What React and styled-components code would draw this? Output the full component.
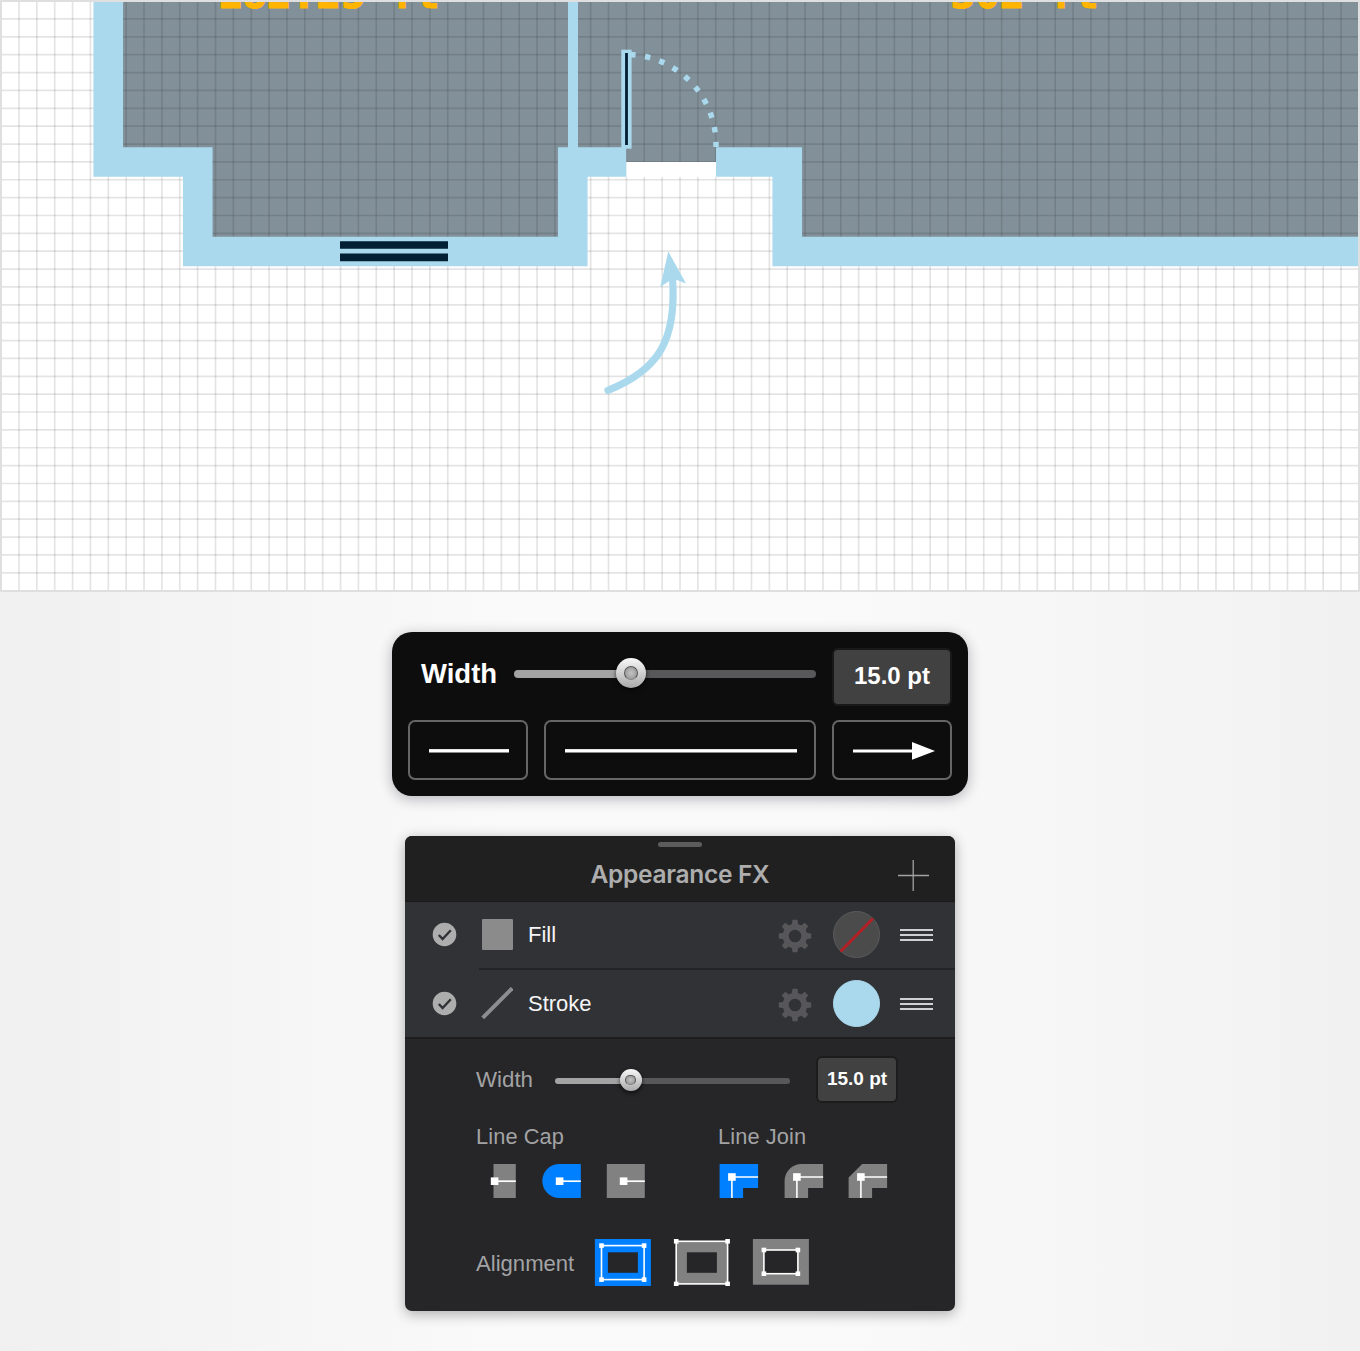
import React from "react";
import styled, { createGlobalStyle } from "styled-components";

const SKY = "#aad9ed";
const NAVY = "#021f33";
const BLUE = "#0080ff";
const GRAY = "#818181";
const PANEL = "#262628";
const sans = `"Liberation Sans", Arial, sans-serif`;

const GlobalStyle = createGlobalStyle`
  *, *::before, *::after { box-sizing: border-box; }
  body { margin: 0; background: #f5f5f5; font-family: ${sans}; }
  svg { display: block; flex: none; }
`;

const Page = styled.main`
  width: 1360px;
  height: 1351px;
  overflow: hidden;
  display: flex;
  flex-direction: column;
  align-items: center;
  background: linear-gradient(90deg, #f0f0f0 0%, #fafafa 38%, #fafafa 60%, #f1f1f1 100%);
`;

const Canvas = styled.section`
  width: 1360px;
  height: 592px;
  border: 2px solid #dfdfdf;
  background: #fff;
  overflow: hidden;
`;

const StrokePopover = styled.section`
  width: 576px;
  height: 164px;
  margin-top: 40px;
  padding: 16px;
  border-radius: 20px;
  background: #0d0d0e;
  box-shadow: 0 3px 14px rgba(20, 20, 40, 0.3);
  display: flex;
  flex-direction: column;
  justify-content: space-between;
`;

const PopoverRow = styled.div`
  display: flex;
  gap: 16px;
`;

const WidthRow = styled.div`
  display: flex;
  align-items: center;
  height: ${(p) => (p.$small ? "48px" : "58px")};
  padding-left: ${(p) => (p.$small ? "0" : "13px")};
`;

const WidthLabel = styled.label`
  width: ${(p) => (p.$small ? "79px" : "93px")};
  font: ${(p) => (p.$small ? "400 22.3px" : "700 27.5px")} / 32px ${sans};
  color: ${(p) => (p.$small ? "#a3a3a5" : "#fff")};
  margin-bottom: ${(p) => (p.$small ? "0" : "6px")};
`;

const Track = styled.div`
  display: flex;
  align-items: center;
  width: ${(p) => (p.$small ? "235px" : "302px")};
  height: ${(p) => (p.$small ? "6px" : "8px")};
  margin-top: ${(p) => (p.$small ? "2px" : "-7px")};
  border-radius: 4px;
  background: linear-gradient(
    90deg,
    #a3a3a4 0 ${(p) => p.$value}px,
    #58585a ${(p) => p.$value}px
  );
`;

const Knob = styled.div`
  display: grid;
  place-items: center;
  flex: none;
  width: ${(p) => p.$size}px;
  height: ${(p) => p.$size}px;
  margin-left: ${(p) => p.$at}px;
  margin-top: -2px;
  border-radius: 50%;
  background: linear-gradient(#f8f8f8, #a9a9a9);
  box-shadow: 0 2px 4px rgba(0, 0, 0, 0.7);

  &::after {
    content: "";
    width: 46.7%;
    height: 46.7%;
    border-radius: 50%;
    border: 1.5px solid #575757;
    border-bottom-color: #868686;
    background: radial-gradient(#c4c4c4, #8c8c8c);
  }
`;

const ValueBox = styled.output`
  display: flex;
  justify-content: center;
  width: ${(p) => (p.$small ? "82px" : "120px")};
  height: ${(p) => (p.$small ? "47px" : "58px")};
  margin-left: ${(p) => (p.$small ? "26px" : "16px")};
  margin-top: ${(p) => (p.$small ? "-2px" : "-1px")};
  border: 2px solid ${(p) => (p.$small ? "#1c1c1d" : "#19191a")};
  border-radius: 6px;
  background: #414142;
  color: #fff;
  font: 700 ${(p) => (p.$small ? "19px / 42px" : "24px / 51px")} ${sans};
`;

const StyleButton = styled.button`
  display: grid;
  place-items: center;
  width: ${(p) => p.$width}px;
  height: 60px;
  padding: 0 0 0 ${(p) => (p.$arrow ? "4px" : "2px")};
  border: 2px solid #666667;
  border-radius: 7px;
  background: transparent;
`;

const LineSample = styled.div`
  width: ${(p) => p.$width}px;
  height: 4px;
  margin-top: 2px;
  background: linear-gradient(#e6e6e6 0 1px, #fff 1px 3px, #8a8a8a 3px);
`;

const FxPanel = styled.section`
  width: 550px;
  height: 475px;
  margin-top: 40px;
  overflow: hidden;
  border-radius: 7px;
  background: ${PANEL};
  box-shadow: 0 3px 14px rgba(0, 0, 0, 0.32);
`;

const FxHeader = styled.header`
  display: grid;
  grid-template: 14px 51px / 1fr 178px 1fr;
  align-items: start;
  justify-items: center;
  height: 66px;
  border-bottom: 1px solid #19191a;
  background: #202020;
`;

const Grip = styled.div`
  grid-area: 1 / 2;
  width: 44px;
  height: 5px;
  margin-top: 6px;
  border-radius: 3px;
  background: #5c5c5d;
`;

const Title = styled.h1`
  grid-area: 2 / 2;
  margin: 9px 0 0;
  white-space: nowrap;
  color: #adadae;
  font: 600 24.5px / 30px Inter, ${sans};
  letter-spacing: -0.3px;
`;

const AddButton = styled.button`
  grid-area: 2 / 3;
  justify-self: end;
  margin: 10px 26px 0 0;
  padding: 0;
  border: 0;
  background: none;
`;

const Layer = styled.div`
  display: flex;
  align-items: center;
  height: ${(p) => p.$height}px;
  padding: 0 21px ${(p) => p.$lift}px 27px;
  background: #313236;
`;

const LayerRule = styled.div`
  height: 2px;
  padding-left: 74px;
  background: #313236;

  &::after {
    content: "";
    display: block;
    height: 2px;
    background: #232427;
  }
`;

const LayerName = styled.span`
  width: 250px;
  margin: ${(p) => p.$lift}px 0 0 15px;
  color: #f5f5f6;
  font: 400 22px / 28px ${sans};
`;

const Swatch = styled.div`
  display: grid;
  place-items: center;
  width: 47px;
  height: 47px;
  margin: 0 20px 0 21px;
  border-radius: 50%;
  border: 1px solid ${(p) => (p.$none ? "#5a5a5b" : SKY)};
  background: ${(p) => (p.$none ? "#4b4b4c" : SKY)};
`;

const Handle = styled.div`
  display: flex;
  flex-direction: column;
  gap: 3px;
  width: 33px;
  margin-top: 1px;

  i {
    height: 2px;
    background: #d0cfd4;
  }
`;

const GlyphCell = styled.div`
  margin-left: 24px;
`;

const GearCell = styled.div`
  margin-top: 3px;
`;

const Settings = styled.div`
  height: 272px;
  padding: 17px 0 0 71px;
  border-top: 2px solid #1d1d1f;
`;

const Columns = styled.div`
  display: grid;
  grid-template-columns: 242px 1fr;
  margin-top: 19px;
`;

const GroupLabel = styled.h2`
  margin: 0;
  color: #a3a3a5;
  font: 400 ${(p) => p.$size || 22}px / 28px ${sans};
  letter-spacing: ${(p) => p.$spacing || 0}px;
  white-space: nowrap;
`;

const IconRow = styled.div`
  display: flex;
  align-items: center;
  gap: 22.5px;
  margin: 13px 0 0 ${(p) => p.$indent || 0}px;
`;

const AlignmentRow = styled.div`
  display: flex;
  align-items: center;
  margin-top: 40px;
`;

const AlignmentLabel = styled(GroupLabel)`
  padding-top: 3px;
`;

const AlignmentChoices = styled.div`
  display: flex;
  gap: 19px;
  margin-left: 18px;
`;

function FloorPlan() {
  const left = "108.25,-20 108.25,162 197.75,162 197.75,251.5 572.75,251.5 572.75,162 626.3,162";
  const right = "716,162 787.25,162 787.25,251.5 1380,251.5";
  const columns = Array.from({ length: 77 }, (_, i) => 1.1 + i * 17.866);
  const rows = Array.from({ length: 33 }, (_, i) => 1.1 + i * 17.866);
  return (
    <svg width="1356" height="588" viewBox="2 2 1356 588">
      <polygon points={`${left} ${right} 1380,-20`} fill="#829099" />
      <g stroke="#000" strokeOpacity=".105" strokeWidth="1.7">
        {columns.map((x) => <path key={x} d={`M${x} 0V590`} />)}
        {rows.map((y) => <path key={y} d={`M0 ${y}H1360`} />)}
      </g>
      <rect x="626.3" y="162" width="89.7" height="15" fill="#fff" />
      <g fill="none" stroke={SKY} strokeWidth="29.6">
        <polyline points={left} />
        <polyline points={right} />
        <path d="M573 0V150" strokeWidth="10" />
      </g>
      <path d="M340 245H448M340 257.4H448" stroke={NAVY} strokeWidth="7.6" />
      <rect x="621.3" y="49.7" width="10.3" height="99" fill={SKY} />
      <path d="M626.5 53V145" stroke={NAVY} strokeWidth="2.8" />
      <path
        d="M626 54.5A90 90 0 0 1 716 144.5V147"
        fill="none"
        stroke={SKY}
        strokeWidth="5.5"
        strokeDasharray="5.4 9.5"
        strokeDashoffset="-4.3"
      />
      <path d="M608 390.3C659 370 677 340 672.5 277" fill="none" stroke={SKY} strokeWidth="7.2" strokeLinecap="round" />
      <path d="M668.3 251.5L686 283.5L673 278.5L660.2 287Z" fill={SKY} />
      <g
        fill="#ffb400"
        stroke="#ffb400"
        strokeWidth="1.1"
        fontFamily="'DejaVu Sans Mono', monospace"
        fontWeight="700"
        fontSize="41"
      >
        <text x="217.5" y="8.4">182.25 ft</text>
        <text x="950.5" y="8.4">302 ft</text>
      </g>
    </svg>
  );
}

const Check = () => (
  <svg width="25" height="25" viewBox="0 0 25 25">
    <circle cx="12.5" cy="12.5" r="11.8" fill="#adadae" />
    <path d="M6.8 13L10.6 17.1L18.8 8.2" fill="none" stroke="#313236" strokeWidth="2.4" />
  </svg>
);

const Gear = () => (
  <svg width="34" height="34" viewBox="-17 -17 34 34">
    <circle r="9.3" fill="none" stroke="#57575a" strokeWidth="6" />
    {[0, 45, 90, 135, 180, 225, 270, 315].map((a) => (
      <path key={a} d="M-3.3 -10.5L-2.5 -16.2H2.5L3.3 -10.5Z" fill="#57575a" transform={`rotate(${a})`} />
    ))}
  </svg>
);

const FillGlyph = () => (
  <svg width="32" height="32" viewBox="0 0 32 32">
    <rect x="1" y="1" width="31" height="31" rx="1" fill="#8b8b8b" />
  </svg>
);

const StrokeGlyph = () => (
  <svg width="32" height="32" viewBox="0 0 32 32">
    <path d="M1.7 30.8L31.2 1.3" stroke="#8e8e90" strokeWidth="4" />
  </svg>
);

function LayerRow({ name, height, lift, glyph, none }) {
  return (
    <Layer $height={height} $lift={lift}>
      <Check />
      <GlyphCell>{glyph}</GlyphCell>
      <LayerName $lift={lift}>{name}</LayerName>
      <GearCell><Gear /></GearCell>
      <Swatch $none={none}>
        {none && (
          <svg width="45" height="45" viewBox="0 0 45 45">
            <path d="M6.5 39.5L39 6.5" stroke="#b51f24" strokeWidth="2.8" />
          </svg>
        )}
      </Swatch>
      <Handle><i /><i /><i /></Handle>
    </Layer>
  );
}

const Node = ({ x, y, size = 7.6 }) => (
  <rect x={x - size / 2} y={y - size / 2} width={size} height={size} fill="#fff" />
);

function CapIcon({ d, active, x }) {
  return (
    <svg width="42" height="34" viewBox="0.2 0 42 34">
      <path d={d} fill={active ? BLUE : GRAY} />
      <path d={`M${x} 17.2H40`} stroke="#fff" strokeWidth="1.7" />
      <Node x={x} y={17.2} />
    </svg>
  );
}

function JoinIcon({ corner, active }) {
  return (
    <svg width="42" height="34" viewBox="-0.6 0 42 34">
      <path d={`${corner}H38.5V24H23.5V34H0Z`} fill={active ? BLUE : GRAY} />
      <path d="M12.3 34V13H38.5" fill="none" stroke="#fff" strokeWidth="1.6" />
      <Node x={12.3} y={13} />
    </svg>
  );
}

function AlignIcon({ active, outer, inner, frame }) {
  const [x, y, w, h] = frame;
  const box = ([bx, by, bw, bh], fill) => <rect x={bx} y={by} width={bw} height={bh} fill={fill} />;
  return (
    <svg width="60" height="48" viewBox="-0.9 0 60 48">
      {box(outer, active ? BLUE : GRAY)}
      {box(inner, PANEL)}
      <rect x={x} y={y} width={w} height={h} fill="none" stroke="#fff" strokeWidth="1.6" />
      {[[x, y], [x + w, y], [x, y + h], [x + w, y + h]].map(([nx, ny]) => (
        <Node key={`${nx}-${ny}`} x={nx} y={ny} size={4.6} />
      ))}
    </svg>
  );
}

export default function App() {
  return (
    <Page>
      <GlobalStyle />
      <Canvas><FloorPlan /></Canvas>

      <StrokePopover>
        <WidthRow>
          <WidthLabel>Width</WidthLabel>
          <Track $value={117}><Knob $size={30} $at={102} /></Track>
          <ValueBox>15.0 pt</ValueBox>
        </WidthRow>
        <PopoverRow>
          <StyleButton $width={120}><LineSample $width={80} /></StyleButton>
          <StyleButton $width={272}><LineSample $width={232} /></StyleButton>
          <StyleButton $width={120} $arrow>
            <svg width="82" height="20" viewBox="0 0 82 20">
              <path d="M0 11H62" stroke="#fff" strokeWidth="3" />
              <path d="M59 2L82 11L59 19.8Z" fill="#fff" />
            </svg>
          </StyleButton>
        </PopoverRow>
      </StrokePopover>

      <FxPanel>
        <FxHeader>
          <Grip />
          <Title>Appearance FX</Title>
          <AddButton aria-label="Add">
            <svg width="32" height="32" viewBox="0 0 32 32">
              <path d="M16.2 0V31M1 15.5H32" stroke="#a2a2a3" strokeWidth="1.3" />
            </svg>
          </AddButton>
        </FxHeader>
        <LayerRow name="Fill" height={66} lift={2} glyph={<FillGlyph />} none />
        <LayerRule />
        <LayerRow name="Stroke" height={67} lift={1} glyph={<StrokeGlyph />} />
        <Settings>
          <WidthRow $small>
            <WidthLabel $small>Width</WidthLabel>
            <Track $small $value={76}><Knob $size={22} $at={64.5} /></Track>
            <ValueBox $small>15.0 pt</ValueBox>
          </WidthRow>
          <Columns>
            <div>
              <GroupLabel $size={21.8} $spacing={0.1}>Line Cap</GroupLabel>
              <IconRow>
                <CapIcon x={18.8} d="M17.7 0H40V34H17.7Z" />
                <CapIcon x={18.8} active d="M40 0H18.5A17 17 0 0 0 18.5 34H40Z" />
                <CapIcon x={18.8} d="M2 0H40V34H2Z" />
              </IconRow>
            </div>
            <div>
              <GroupLabel $size={21.8} $spacing={0.1}>Line Join</GroupLabel>
              <IconRow $indent={1}>
                <JoinIcon active corner="M0 0" />
                <JoinIcon corner="M0 17A17 17 0 0 1 17 0" />
                <JoinIcon corner="M0 13.5L13.5 0" />
              </IconRow>
            </div>
          </Columns>
          <AlignmentRow>
            <AlignmentLabel $size={22.1}>Alignment</AlignmentLabel>
            <AlignmentChoices>
              <AlignIcon active outer={[2, 1, 56, 47]} inner={[15, 14.3, 30, 20.5]} frame={[8.6, 7.6, 42.6, 34]} />
              <AlignIcon outer={[4.3, 3.3, 51.4, 42.6]} inner={[15, 14.3, 30, 20.5]} frame={[4.3, 3.3, 51.4, 42.6]} />
              <AlignIcon outer={[2, 1, 56, 45.7]} inner={[13, 12, 34, 23.7]} frame={[13, 12, 34, 23.7]} />
            </AlignmentChoices>
          </AlignmentRow>
        </Settings>
      </FxPanel>
    </Page>
  );
}
